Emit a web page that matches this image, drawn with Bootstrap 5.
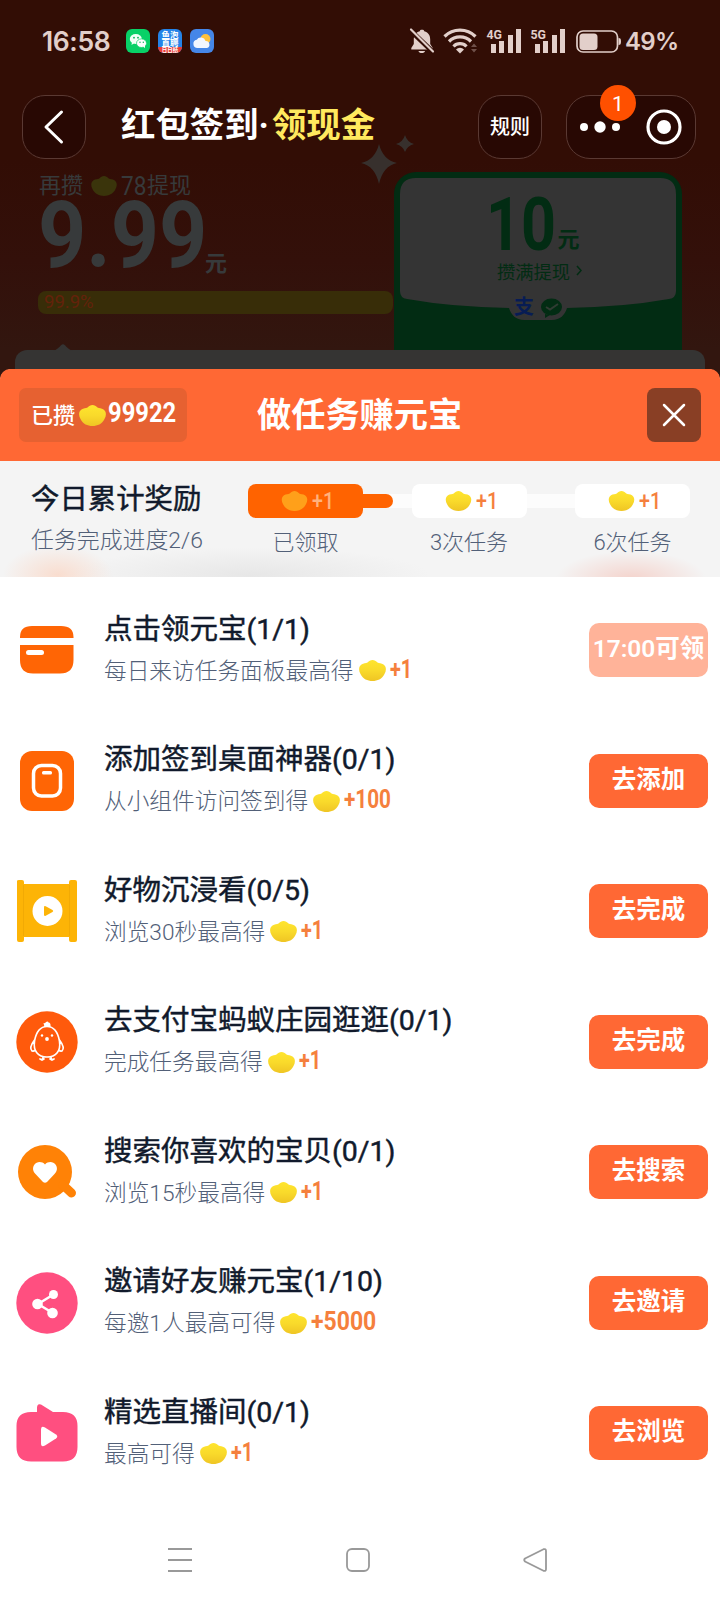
<!DOCTYPE html>
<html lang="zh-CN">
<head>
<meta charset="utf-8">
<meta name="viewport" content="width=device-width, initial-scale=1">
<title>红包签到</title>
<link href="https://cdn.jsdelivr.net/npm/bootstrap@5.3.0/dist/css/bootstrap.min.css" rel="stylesheet">
<style>
  body { font-family: Roboto, "Noto Sans CJK SC", sans-serif; width: 720px; height: 1604px; overflow: hidden; background: #fff; color: #111a2c; }
  svg { display: block; flex: none; }
  .flex-none { flex: none; }
  .hero { height: 381px; background: linear-gradient(#320d05 0, #320d05 160px, #33100a 260px, #32160f 350px); }
  .statusbar { height: 84px; padding: 0 43px 2px 41px; color: #e2cfca; }
  .clock { font: 600 26.5px/1 Inter, sans-serif; letter-spacing: -.4px; width: 84px; margin-left: 1px; }
  .percent { font: 600 24px/1 Inter, sans-serif; letter-spacing: -.7px; width: 56px; padding-top: 1px; }
  .topnav { height: 86px; padding: 11px 24px 0 22px; }
  .pill-btn { width: 64px; height: 64px; border: 1px solid #5a3933; border-radius: 23px; background: #280803; color: #fff; font-size: 20px; font-weight: 500; }
  .capsule { width: 130px; height: 64px; border: 1px solid #5a3933; border-radius: 24px; background: #280803; }
  .notice { left: 33px; top: -11px; width: 36px; height: 36px; padding-top: 3px; background: #ff5000; color: #fff; font-size: 21px; }
  .page-title { font-size: 34.4px; line-height: 50px; font-weight: 700; color: #fff; margin: 5px 0 0 35px; }
  .page-title span { color: #ffe95e; margin-left: 3px; }
  .spark { left: 361px; top: 133px; }
  .wallet { width: 394px; padding: 3px 0 0 38px; color: #373a3b; }
  .need { font-size: 22px; line-height: 26px; padding-left: 1px; }
  .need-num { font-size: 26px; line-height: 26px; width: 26px; transform: scaleX(.87); }
  .amount { height: 78px; }
  .amount b { font-size: 92px; line-height: 74px; width: 167px; }
  .shrink { display: inline-block; transform-origin: left center; white-space: nowrap; }
  .big-num { transform: scaleX(.915); }
  .bar-gold { width: 355px; height: 23px; margin-top: 14px; border-radius: 8px; background: #382d08; color: #64220b; font-size: 18.500px; line-height: 22px; padding-left: 6px; }
  .ticket { width: 288px; height: 178px; margin-top: 2px; border-radius: 22px 22px 0 0; background: #022c13; color: #022c13; }
  .ticket-face { left: 6px; top: 6px; }
  .tray { height: 31px; margin: 0 15px; border-radius: 12px 12px 0 0; background: #353433; }
  .sheet { position: relative; margin-top: -12px; border-radius: 12px 12px 0 0; background: #fff; }
  .sheet-head { height: 92px; border-radius: 10px 10px 0 0; background: #ff6834; padding: 0 19px; color: #fff; }
  .saved { width: 168px; height: 54px; border-radius: 7px; background: #e66131; font-size: 22px; font-weight: 500; padding-left: 12px; }
  .saved-num { font-size: 27px; margin-left: 2px; transform: translateY(-2px) scaleX(.88); }
  .sheet-title { font-size: 34.2px; line-height: 50px; font-weight: 600; margin-left: 70px; }
  .close-btn { width: 54px; height: 54px; border-radius: 8px; background: #893f25; border: 0; }
  .progress-zone { height: 116px; padding: 19px 30px 0 31px; background: radial-gradient(ellipse 55px 30px at 58px 114px, #f9ddcf, #f9ddcf00), radial-gradient(ellipse 75px 28px at 631px 118px, #f4d3cc, #f4d3cc00), radial-gradient(ellipse 180px 28px at 250px 114px, #e7e7e7, #e7e7e700), #f4f4f4; }
  .today { font-size: 28.4px; line-height: 40px; font-weight: 400; -webkit-text-stroke: .45px; }
  .soft { font-size: 22.7px; font-weight: 300; color: #526078; }
  .today-count { line-height: 42px; font-size: 22.9px; }
  .steps { width: 442px; margin-left: auto; padding-top: 4px; }
  .step-chip { width: 115px; height: 34px; border-radius: 8px; background: #fff; color: #f5803d; font-size: 24px; font-weight: 500; padding-left: 33px; }
  .step-chip.got { background: #ff6300; color: #ffb27d; }
  .chip-num { margin-left: 4px; transform: scaleX(.82); }
  .link-bar { width: 49px; height: 14px; margin-top: 10px; background: #fcfcfc; }
  .link-bar div { width: 30px; height: 14px; background: #ff6300; border-radius: 0 7px 7px 0; }
  .step-label { width: 115px; line-height: 30px; margin-top: 10px; font-size: 22px; text-align: center; }
  .tasks { padding-top: 8px; }
  .task { height: 130.5px; padding: 0 12px 0 16px; }
  .task-text { margin-left: 26px; white-space: nowrap; }
  .task-name { font-size: 28.5px; line-height: 42px; font-weight: 400; -webkit-text-stroke: .45px; }
  .task-desc { line-height: 41px; height: 41px; }
  .task-desc svg { margin-left: 5px; margin-top: -1px; }
  .gain { font-size: 25px; font-weight: 700; color: #f5803d; margin-left: 4px; transform: translateY(-2px) scaleX(.79); }
  .gain.hundreds { transform: translateY(-2px) scaleX(.83); }
  .gain.thousands { transform: translateY(-2px) scaleX(.92); }
  .go { width: 119px; height: 54px; border-radius: 10px; background: #ff6834; color: #fff; font-size: 24.5px; font-weight: 600; line-height: 50px; padding: 0 0 2px; border: 0; white-space: nowrap; }
  .go.waiting { background: #ffb399; }
  .sysnav { height: 90px; padding: 0 172px 0 167px; margin-top: 16px; }
</style>
</head>
<body>
<svg width="0" height="0" class="position-absolute">
  <defs>
    <linearGradient id="gold" x1="0" y1="0" x2="0" y2="1"><stop offset="0" stop-color="#ffe52e"/><stop offset=".5" stop-color="#f9da2b"/><stop offset="1" stop-color="#efc524"/></linearGradient>
    <symbol id="ingot" viewBox="0 0 27 21"><path d="M2.500 4.500C4.500 3 7 3.800 8.500 2.600C10 1 11.500 0 13.500 0S17 1 18.500 2.600C20 3.800 22.500 3 24.500 4.500C27.500 6.500 27.500 10.500 25.500 14C23 19 18.500 21 13.500 21S4 19 1.500 14C-.5 10.500-.5 6.500 2.500 4.500Z"/></symbol>
  </defs>
</svg>

<header class="hero d-flex flex-column position-relative">
  <div class="statusbar d-flex align-items-center">
    <span class="clock">16:58</span>
    <div class="d-flex gap-2">
      <svg width="24" height="24"><rect width="24" height="24" rx="6" fill="#08d167"/><ellipse cx="9.800" cy="10" rx="6" ry="5" fill="#f2fff7"/><path d="M6 13l-.5 3 3-2z" fill="#f2fff7"/><ellipse cx="15.500" cy="14.200" rx="5" ry="4.300" fill="#fff" stroke="#08d167" stroke-width=".7"/><path d="M17 17l2 2.200V16z" fill="#fff"/><g fill="#08b058"><circle cx="8" cy="8.700" r=".9"/><circle cx="12" cy="8.700" r=".9"/><circle cx="14" cy="13.300" r=".7"/><circle cx="17.300" cy="13.300" r=".7"/></g></svg>
      <svg width="24" height="24"><clipPath id="app"><rect width="24" height="24" rx="6"/></clipPath><g clip-path="url(#app)"><rect width="24" height="24" fill="#2583e8"/><rect y="18" width="24" height="6" fill="#e83d36"/><g fill="#fff" font-size="8.500" font-weight="700" text-anchor="middle"><text x="12" y="9">鱼泡</text><text x="12" y="17">直聘</text><text x="12" y="23.300" font-size="5.500">日日结</text></g></g></svg>
      <svg width="24" height="24"><rect width="24" height="24" rx="6" fill="#4586e8"/><circle cx="15.500" cy="10" r="5" fill="#ffc13b"/><path d="M7.500 19a4.200 4.200 0 0 1-.8-8.300A5 5 0 0 1 15.600 12a3.600 3.600 0 0 1 1.400 7z" fill="#f2f6ff"/></svg>
    </div>
    <svg class="ms-auto" width="212" height="28" viewBox="409 27 212 28" fill="#e2cfca">
      <path d="M422 29.500c-1.500 0-2 .8-2.200 1.700-4.500 1.300-6 4.500-6 8.300v4.500l-2.500 4v1.500h21.400V48l-2.500-4v-4.500c0-3.800-1.500-7-6-8.300-.2-.9-.7-1.700-2.200-1.700zM418.500 51h6.500c-.3 1.500-1.500 2-3.200 2s-3-.5-3.300-2z"/><path d="M410 30l23 22" stroke="#320d05" stroke-width="5"/><path d="M411 29.500l22 22" stroke="#e2cfca" stroke-width="2.200" stroke-linecap="round"/>
      <g fill="none" stroke="#e2cfca" stroke-width="3.200"><path d="M444.500 36.500a22 22 0 0 1 31 0M449 41.500a15.500 15.500 0 0 1 22 0M453.500 46.500a9 9 0 0 1 13 0"/></g><path d="M460 53.500l-4-4a5.500 5.500 0 0 1 8 0z"/><path d="M471 47l3-3.500 3 3.500zM471 49l3 3.500 3-3.500z" opacity=".35"/>
      <g id="bars"><rect x="491" y="44" width="5" height="9"/><rect x="499" y="41" width="5" height="12"/><rect x="508" y="35" width="5" height="18"/><rect x="516" y="29" width="5" height="24"/></g><use href="#bars" x="44"/>
      <text x="486.500" y="38.500" font-size="13.500" font-weight="700" textLength="15.500" lengthAdjust="spacingAndGlyphs">4G</text><text x="530.500" y="38.500" font-size="13.500" font-weight="700" textLength="15.500" lengthAdjust="spacingAndGlyphs">5G</text>
      <rect x="577" y="31" width="40.500" height="21" rx="6" fill="none" stroke="#e2cfca" stroke-width="1.700"/><rect x="579.500" y="33.500" width="18" height="16.500" rx="3.500"/><path d="M618.500 38c2 0 2.500 1 2.500 3.500s-.5 3.500-2.500 3.500z"/>
    </svg>
    <span class="percent ps-1">49%</span>
  </div>

  <nav class="topnav d-flex align-items-start">
    <button class="pill-btn p-0 d-flex align-items-center justify-content-center" aria-label="返回"><svg width="24" height="36" fill="none" stroke="#fff" stroke-width="3" stroke-linecap="round" stroke-linejoin="round"><path d="M19.500 3L4 18l15.500 15"/></svg></button>
    <h1 class="page-title text-nowrap mb-0">红包签到·<span>领现金</span></h1>
    <button class="pill-btn p-0 ms-auto">规则</button>
    <div class="capsule position-relative ms-4">
      <svg width="128" height="62" fill="#fff"><circle cx="17" cy="31" r="4"/><circle cx="33" cy="31" r="5.700"/><circle cx="49" cy="31" r="4"/><circle cx="97" cy="31" r="16" fill="none" stroke="#fff" stroke-width="3.200"/><circle cx="97" cy="31" r="7"/></svg>
      <span class="notice position-absolute rounded-circle d-flex align-items-center justify-content-center">1</span>
    </div>
  </nav>
  <svg class="spark position-absolute" width="54" height="54" fill="#37302d"><path d="M18 11Q22 27 36 30 22 33 18 51 14 33 0 30 14 27 18 11ZM44 2q2 7 9 9-7 2-9 8-2-6-9-8 7-2 9-9Z"/></svg>

  <div class="d-flex align-items-start">
    <section class="wallet">
      <div class="need d-flex align-items-center"><span>再攒</span><svg class="ms-2 me-1" width="26" height="20" fill="#3a340b"><use href="#ingot"/></svg><span class="need-num shrink">78</span><span>提现</span></div>
      <div class="amount d-flex align-items-start"><b class="shrink big-num">9.99</b><span class="need p-0 fw-bold align-self-end">元</span></div>
      <div class="bar-gold">99.9%</div>
    </section>
    <section class="ticket position-relative">
      <svg class="ticket-face position-absolute" width="276" height="150"><path d="M16 0H260Q276 0 276 16V113Q276 120 269 121Q224 129 167 130C165 137 160 142 152 142H124C116 142 111 137 109 130Q52 129 7 121Q0 120 0 113V16Q0 0 16 0Z" fill="#343434"/>
        <g fill="#022c13"><text x="86" y="72" font-size="74" font-weight="700" textLength="70" lengthAdjust="spacingAndGlyphs">10</text><text x="157.500" y="69" font-size="22" font-weight="700">元</text><text x="97" y="100.500" font-size="18.300">攒满提现</text><ellipse cx="151.500" cy="129" rx="10.500" ry="8.500"/><path d="M145 136v4l5-3z"/></g>
        <path d="M177 88l4 4.500-4 4.500" fill="none" stroke="#022c13" stroke-width="1.500"/><path d="M146 129l4 2.500 8-5.500" fill="none" stroke="#303c33" stroke-width="2"/>
        <text x="114" y="136" font-size="20" font-weight="700" fill="#071c54">支</text></svg>
    </section>
  </div>
  <div class="tray position-relative mt-auto"><svg class="position-absolute" style="left:38px;top:-6px" width="20" height="7"><path d="M0 7Q4 6 8 1.200Q10-.7 12 1.200Q16 6 20 7Z" fill="#353433"/></svg></div>
</header>

<main class="sheet">
  <div class="sheet-head d-flex align-items-center">
    <div class="saved d-flex align-items-center"><span>已攒</span><svg class="ms-1" width="27" height="21" fill="url(#gold)"><use href="#ingot"/></svg><b class="shrink saved-num">99922</b></div>
    <h2 class="sheet-title mb-0 text-nowrap">做任务赚元宝</h2>
    <button class="close-btn ms-auto p-0 d-flex align-items-center justify-content-center" aria-label="关闭"><svg width="24" height="24" stroke="#fff" stroke-width="2.500" stroke-linecap="round"><path d="M2 2l20 20M22 2L2 22"/></svg></button>
  </div>

  <section class="progress-zone d-flex align-items-start">
    <div class="text-nowrap"><div class="today">今日累计奖励</div><div class="soft today-count">任务完成进度2/6</div></div>
    <div class="steps d-flex flex-none">
      <div><div class="step-chip got d-flex align-items-center"><svg width="27" height="20" fill="#ffa01a"><use href="#ingot"/></svg><span class="shrink chip-num">+1</span></div><div class="step-label soft">已领取</div></div>
      <div class="link-bar"><div></div></div>
      <div><div class="step-chip d-flex align-items-center"><svg width="27" height="20" fill="url(#gold)"><use href="#ingot"/></svg><span class="shrink chip-num">+1</span></div><div class="step-label soft">3次任务</div></div>
      <div class="link-bar"></div>
      <div><div class="step-chip d-flex align-items-center"><svg width="27" height="20" fill="url(#gold)"><use href="#ingot"/></svg><span class="shrink chip-num">+1</span></div><div class="step-label soft">6次任务</div></div>
    </div>
  </section>

  <section class="tasks">
    <div class="task d-flex align-items-center">
      <svg width="62" height="62"><path d="M4 19V18Q4 7 16 7H45Q57.500 7 57.500 18V19ZM4 26H57.500V41Q57.500 54.500 44 54.500H17Q4 54.500 4 41Z" fill="#ff6505"/><rect x="10" y="31" width="18" height="5" rx="2.500" fill="#fff"/></svg>
      <div class="task-text"><div class="task-name">点击领元宝(1/1)</div><div class="task-desc soft d-flex align-items-center">每日来访任务面板最高得<svg width="27" height="21" fill="url(#gold)"><use href="#ingot"/></svg><span class="gain shrink">+1</span></div></div>
      <button class="go waiting ms-auto">17:00可领</button>
    </div>
    <div class="task d-flex align-items-center">
      <svg width="62" height="62"><rect x="4" y="1" width="54" height="60" rx="12" fill="#ff6505"/><rect x="17.500" y="15.500" width="27" height="30.500" rx="8" fill="none" stroke="#fff" stroke-width="3.500"/><rect x="26" y="21" width="10" height="3.500" rx="1.500" fill="#fff"/></svg>
      <div class="task-text"><div class="task-name">添加签到桌面神器(0/1)</div><div class="task-desc soft d-flex align-items-center">从小组件访问签到得<svg width="27" height="21" fill="url(#gold)"><use href="#ingot"/></svg><span class="gain shrink hundreds">+100</span></div></div>
      <button class="go ms-auto">去添加</button>
    </div>
    <div class="task d-flex align-items-center">
      <svg width="62" height="64"><path d="M1 2Q1 1 3 1H6Q8 1 8 3V5H53V3Q53 1 55 1H59Q61 1 61 3V61Q61 63 59 63H55Q53 63 53 61V58H8V61Q8 63 6 63H3Q1 63 1 61Z" fill="#fdb406"/><path d="M7.500 6V57M53.500 6V57" stroke="#f2aa04"/><circle cx="31.500" cy="32" r="15" fill="#fff"/><path d="M28 28.200Q28 26.500 29.700 27.300L36.500 31Q38 32 36.500 33L29.700 36.700Q28 37.500 28 35.800Z" fill="#fdb406"/></svg>
      <div class="task-text"><div class="task-name">好物沉浸看(0/5)</div><div class="task-desc soft d-flex align-items-center">浏览30秒最高得<svg width="27" height="21" fill="url(#gold)"><use href="#ingot"/></svg><span class="gain shrink">+1</span></div></div>
      <button class="go ms-auto">去完成</button>
    </div>
    <div class="task d-flex align-items-center">
      <svg width="62" height="62"><circle cx="31" cy="31" r="30.700" fill="#ff5a0c"/><g fill="none" stroke="#fff" stroke-width="1.700" stroke-linecap="round"><path d="M31 15.500C23 15.500 20 22 18.500 30C17 40 22 46 31 46S45 40 43.500 30C42 22 39 15.500 31 15.500ZM18.500 29C14 35 14 38 16 40Q18 40.500 19 39M43.500 29C48 35 48 38 46 40Q44 40.500 43 39M27 46.500l-1 2.500m-2-1l2 1 2-1M35 46.500l1 2.500m-2-1l2 1 2-1"/></g><path d="M28.500 16l-1-4q2 .5 2.500-1 2-1 2.500.5 2.500 0 2 4.500z" fill="#fff"/><circle cx="31" cy="28" r="1.900" fill="#fff"/><circle cx="26" cy="24.500" r="1.200" fill="#fff"/><circle cx="36" cy="24.500" r="1.200" fill="#fff"/></svg>
      <div class="task-text"><div class="task-name">去支付宝蚂蚁庄园逛逛(0/1)</div><div class="task-desc soft d-flex align-items-center">完成任务最高得<svg width="27" height="21" fill="url(#gold)"><use href="#ingot"/></svg><span class="gain shrink">+1</span></div></div>
      <button class="go ms-auto">去完成</button>
    </div>
    <div class="task d-flex align-items-center">
      <svg width="62" height="62"><circle cx="29" cy="31" r="27" fill="#ff8206"/><path d="M47 44L55.500 52" stroke="#ff8206" stroke-width="9" stroke-linecap="round"/><path d="M29 23.500C26 20 20.500 20.500 18.500 23.500C16 27 17 30.500 19.500 33L27 41Q29 42.500 31 41L38.500 33C41 30.500 42 27 39.500 23.500C37.500 20.500 32 20 29 23.500Z" fill="#fff"/></svg>
      <div class="task-text"><div class="task-name">搜索你喜欢的宝贝(0/1)</div><div class="task-desc soft d-flex align-items-center">浏览15秒最高得<svg width="27" height="21" fill="url(#gold)"><use href="#ingot"/></svg><span class="gain shrink">+1</span></div></div>
      <button class="go ms-auto">去搜索</button>
    </div>
    <div class="task d-flex align-items-center">
      <svg width="62" height="62"><circle cx="31" cy="31" r="30.700" fill="#ff4f80"/><path d="M37.500 22.500L22 32L36 40.500" fill="none" stroke="#fff" stroke-width="2.500"/><circle cx="37.500" cy="22.500" r="4.500" fill="#fff"/><circle cx="21.500" cy="32" r="5.300" fill="#fff"/><circle cx="36.500" cy="41" r="5.300" fill="#fff"/></svg>
      <div class="task-text"><div class="task-name">邀请好友赚元宝(1/10)</div><div class="task-desc soft d-flex align-items-center">每邀1人最高可得<svg width="27" height="21" fill="url(#gold)"><use href="#ingot"/></svg><span class="gain shrink thousands">+5000</span></div></div>
      <button class="go ms-auto">去邀请</button>
    </div>
    <div class="task d-flex align-items-center">
      <svg width="62" height="62"><path d="M15 10H21V6Q21 1 25 2.500L37 10H47Q61.500 10 61.500 24V45Q61.500 59.500 47 59.500H15Q.5 59.500 .5 45V24Q.5 10 15 10Z" fill="#ff4f80"/><path d="M25 28Q25 23 29 25.500L40 32.500Q42.500 34.500 40 36.500L29 43.500Q25 46 25 41Z" fill="#fff"/></svg>
      <div class="task-text"><div class="task-name">精选直播间(0/1)</div><div class="task-desc soft d-flex align-items-center">最高可得<svg width="27" height="21" fill="url(#gold)"><use href="#ingot"/></svg><span class="gain shrink">+1</span></div></div>
      <button class="go ms-auto">去浏览</button>
    </div>
  </section>

  <nav class="sysnav d-flex align-items-center justify-content-between">
    <svg width="26" height="26" stroke="#999" stroke-width="2"><path d="M1 2h24M1 13h24M1 24h24"/></svg>
    <svg width="26" height="26" fill="none" stroke="#999" stroke-width="1.800"><rect x="2" y="2" width="22" height="22" rx="5"/></svg>
    <svg width="26" height="26" fill="none" stroke="#999" stroke-width="1.800" stroke-linejoin="round"><path d="M21.500 2.200L3 11.500Q1.500 13 3 14.500L21.500 23.800Q24 24.500 24 22V4Q24 1.500 21.500 2.200Z"/></svg>
  </nav>
</main>
<script src="https://cdn.jsdelivr.net/npm/bootstrap@5.3.0/dist/js/bootstrap.bundle.min.js"></script>
</body>
</html>
